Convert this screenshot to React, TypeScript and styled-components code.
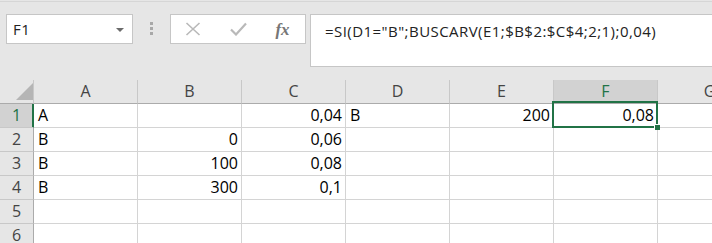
import React from "react";
import styled, { createGlobalStyle, css } from "styled-components";

const Global = createGlobalStyle`
  html, body { margin: 0; padding: 0; background: #e6e6e6; overflow: hidden; }
  body { width: 712px; height: 243px; }
`;

const GREEN = "#217346";
const GRID = "#d4d4d4";
const HEAD_LINE = "#ababab";

const Window = styled.div`
  width: 712px;
  height: 243px;
  overflow: hidden;
  background: #e6e6e6;
  display: flex;
  flex-direction: column;
  font-family: "Open Sans", "Liberation Sans", sans-serif;
`;

const Toolbar = styled.div`
  box-sizing: border-box;
  height: 79px;
  margin-top: 1px;
  border-top: 1px solid #d6d6d6;
  display: flex;
  align-items: flex-start;
  padding: 12px 0 0 6px;
  flex-shrink: 0;
`;

const NameBox = styled.div`
  box-sizing: border-box;
  width: 127px;
  height: 30px;
  background: #fff;
  border: 1px solid #c6c6c6;
  display: flex;
  align-items: center;
  justify-content: space-between;
  padding: 0 8px 0 6px;
  font-size: 15px;
  letter-spacing: 0.4px;
  color: #222;
`;

const DropArrow = styled.span`
  width: 0;
  height: 0;
  border-left: 4px solid transparent;
  border-right: 4px solid transparent;
  border-top: 4px solid #6b6b6b;
  margin-top: 1px;
`;

const Grip = styled.div`
  display: flex;
  flex-direction: column;
  gap: 2px;
  margin: 8px 17px 0 17px;
`;

const GripDot = styled.span`
  width: 3px;
  height: 3px;
  background: #a8a8a8;
`;

const FxBox = styled.div`
  box-sizing: border-box;
  width: 136px;
  height: 30px;
  background: #fff;
  border: 1px solid #c6c6c6;
  display: flex;
  align-items: center;
  padding-left: 14px;
`;

const IconSlot = styled.span<{ $w: number; $gap: number }>`
  display: flex;
  align-items: center;
  justify-content: center;
  width: ${(p) => p.$w}px;
  margin-right: ${(p) => p.$gap}px;
`;

const FxText = styled.span`
  font-family: "Liberation Serif", "DejaVu Serif", serif;
  font-style: italic;
  font-weight: bold;
  font-size: 17px;
  color: #767676;
  line-height: 1;
`;

const FormulaBox = styled.div`
  box-sizing: border-box;
  flex: 1;
  height: 53px;
  margin-left: 4px;
  margin-right: -20px;
  background: #fff;
  border: 1px solid #c6c6c6;
  padding: 6px 0 0 14px;
  font-size: 15px;
  letter-spacing: 0.45px;
  color: #222;
  white-space: nowrap;
  line-height: 21px;
`;

const Sheet = styled.div`
  display: grid;
  grid-template-columns: 34px repeat(7, 104px);
  grid-auto-rows: 24px;
`;

const cellText = css`
  box-sizing: border-box;
  font-size: 16px;
  line-height: 23px;
  white-space: nowrap;
  overflow: visible;
`;

const Corner = styled.div`
  box-sizing: border-box;
  background: #e6e6e6;
  border-right: 1px solid #c8c8c8;
  border-bottom: 1px solid ${HEAD_LINE};
  display: flex;
  align-items: flex-end;
  justify-content: flex-end;
  padding: 0 0 3px 0;
`;

const CornerTriangle = styled.span`
  width: 0;
  height: 0;
  border-left: 17px solid transparent;
  border-bottom: 17px solid #b5b5b5;
`;

const ColHead = styled.div<{ $sel?: boolean }>`
  ${cellText};
  background: ${(p) => (p.$sel ? "#d2d2d2" : "#e6e6e6")};
  color: ${(p) => (p.$sel ? GREEN : "#444")};
  border-right: 1px solid #c8c8c8;
  border-bottom: 1px solid ${HEAD_LINE};
  text-align: center;
`;

const RowHead = styled.div<{ $sel?: boolean }>`
  ${cellText};
  background: ${(p) => (p.$sel ? "#d2d2d2" : "#e6e6e6")};
  color: ${(p) => (p.$sel ? GREEN : "#444")};
  border-right: 1px solid ${(p) => (p.$sel ? GREEN : HEAD_LINE)};
  box-shadow: ${(p) => (p.$sel ? `inset -1px 0 0 ${GREEN}` : "none")};
  border-bottom: 1px solid #c8c8c8;
  text-align: center;
`;

const Cell = styled.div<{ $num?: boolean; $sel?: boolean }>`
  ${cellText};
  position: relative;
  background: #fff;
  color: #000;
  border-right: 1px solid ${GRID};
  border-bottom: 1px solid ${GRID};
  padding: 0 3px 0 4px;
  text-align: ${(p) => (p.$num ? "right" : "left")};
  ${(p) =>
    p.$sel &&
    css`
      z-index: 2;
      &::after {
        content: "";
        position: absolute;
        top: -3px;
        left: -2px;
        right: -1px;
        bottom: -1px;
        border: 2px solid ${GREEN};
        pointer-events: none;
      }
    `}
`;

const FillHandle = styled.span`
  position: absolute;
  right: -3px;
  bottom: -3px;
  width: 5px;
  height: 5px;
  background: ${GREEN};
  border: 1px solid #fff;
  border-width: 1px 0 0 1px;
  z-index: 3;
`;

type CellData = { v: string; num?: boolean };

const rows: CellData[][] = [
  [{ v: "A" }, { v: "" }, { v: "0,04", num: true }, { v: "B" }, { v: "200", num: true }, { v: "0,08", num: true }, { v: "" }],
  [{ v: "B" }, { v: "0", num: true }, { v: "0,06", num: true }, { v: "" }, { v: "" }, { v: "" }, { v: "" }],
  [{ v: "B" }, { v: "100", num: true }, { v: "0,08", num: true }, { v: "" }, { v: "" }, { v: "" }, { v: "" }],
  [{ v: "B" }, { v: "300", num: true }, { v: "0,1", num: true }, { v: "" }, { v: "" }, { v: "" }, { v: "" }],
  [{ v: "" }, { v: "" }, { v: "" }, { v: "" }, { v: "" }, { v: "" }, { v: "" }],
  [{ v: "" }, { v: "" }, { v: "" }, { v: "" }, { v: "" }, { v: "" }, { v: "" }],
];

const cols = ["A", "B", "C", "D", "E", "F", "G"];

export default function App() {
  return (
    <>
      <Global />
      <Window>
        <Toolbar>
          <NameBox>
            <span>F1</span>
            <DropArrow />
          </NameBox>
          <Grip>
            <GripDot />
            <GripDot />
            <GripDot />
          </Grip>
          <FxBox>
            <IconSlot $w={16} $gap={29}>
              <svg width="16" height="14" viewBox="0 0 16 14">
                <path d="M1.5 1 L14.5 13 M14.5 1 L1.5 13" stroke="#b9b9b9" strokeWidth="1.6" fill="none" />
              </svg>
            </IconSlot>
            <IconSlot $w={17} $gap={27}>
              <svg width="17" height="14" viewBox="0 0 17 14">
                <path d="M1 7.5 L6 12.5 L16 1.5" stroke="#b9b9b9" strokeWidth="2.2" fill="none" />
              </svg>
            </IconSlot>
            <IconSlot $w={17} $gap={0}>
              <FxText>fx</FxText>
            </IconSlot>
          </FxBox>
          <FormulaBox>=SI(D1="B";BUSCARV(E1;$B$2:$C$4;2;1);0,04)</FormulaBox>
        </Toolbar>
        <Sheet>
          <Corner>
            <CornerTriangle />
          </Corner>
          {cols.map((c) => (
            <ColHead key={c} $sel={c === "F"}>
              {c}
            </ColHead>
          ))}
          {rows.map((r, ri) => (
            <React.Fragment key={ri}>
              <RowHead $sel={ri === 0}>{ri + 1}</RowHead>
              {r.map((cell, ci) => {
                const sel = ri === 0 && ci === 5;
                return (
                  <Cell key={ci} $num={cell.num} $sel={sel}>
                    {cell.v}
                    {sel && <FillHandle />}
                  </Cell>
                );
              })}
            </React.Fragment>
          ))}
        </Sheet>
      </Window>
    </>
  );
}
